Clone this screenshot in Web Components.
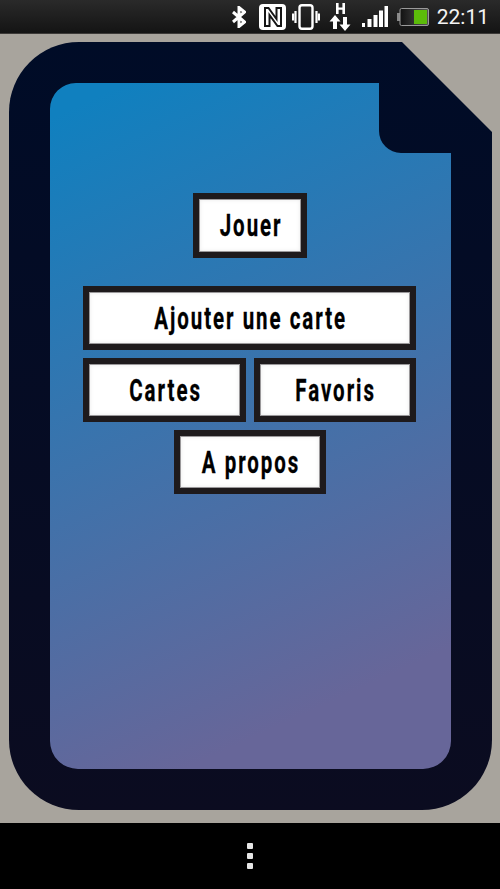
<!DOCTYPE html>
<html>
<head>
<meta charset="utf-8">
<title>Menu</title>
<style>
  html, body { margin: 0; height: 100%; background: #a8a49d; }
  body { display: flex; flex-direction: column; height: 889px; overflow: hidden; }
  .row { display: flex; gap: 8px; margin: 0 0 8px -1px; }
</style>
</head>
<body>
<status-bar time="22:11"></status-bar>
<card-frame>
  <menu-button style="width:114px;height:65px;margin-bottom:28px">Jouer</menu-button>
  <menu-button style="width:333px;margin:0 0 8px -1px">Ajouter une carte</menu-button>
  <div class="row">
    <menu-button style="width:163px">Cartes</menu-button>
    <menu-button style="width:162px">Favoris</menu-button>
  </div>
  <menu-button style="width:152px">A propos</menu-button>
</card-frame>
<nav-bar></nav-bar>

<script>
class StatusBar extends HTMLElement {
    constructor() {
        super();
        this.shadow = this.attachShadow({ mode: 'open' });
    }

    connectedCallback() {
        const time = this.getAttribute("time") || "";
        this.shadow.innerHTML = `
        <style>
            :host {
                display: flex; align-items: center; justify-content: flex-end;
                flex: none; height: 34px; box-sizing: border-box; padding-right: 11px;
                background: linear-gradient(#2a2a2a, #141414);
                border-bottom: 1px solid #3c3a38;
                color: #f4f4f4;
                font-family: Roboto, "Liberation Sans", sans-serif;
            }
            svg { display: block; flex: none; }
            .time { font-size: 21px; line-height: 34px; margin-left: 8px; }
        </style>
        <svg width="14" height="22" viewBox="0 0 14 22" fill="none" stroke="#fff" stroke-width="3" style="margin-right:13px">
            <path d="M1 6l11.500 10-5.500 4.500V1.500L12.500 6 1 16"/>
        </svg>
        <svg width="27" height="26" viewBox="0 0 27 26" style="margin-right:6px">
            <rect width="27" height="26" rx="4" fill="#fff"/>
            <path d="M6 22V4h3.500l8 11V4H22v18h-3.500l-8-11v11z" fill="#fff" stroke="#151515" stroke-width="2"/>
        </svg>
        <svg width="28" height="26" viewBox="0 0 28 26" fill="none" stroke="#fff" style="margin-right:9px">
            <rect x="7.500" y="1.200" width="13" height="23.600" rx="2.500" stroke-width="2.400"/>
            <path d="M3.500 7v12M1 9.500v7M24.500 7v12M27 9.500v7" stroke-width="2.200"/>
        </svg>
        <svg width="22" height="28" viewBox="0 0 22 28" fill="#fff" style="margin-right:11px">
            <path d="M7 0h2.600v4.400h3.800V0H16v11h-2.600V6.800H9.600V11H7z"/>
            <path d="M6 12l5.500 6.500H8V26H4v-7.500H.5zM16 28l-5.500-6.500H14V14h4v7.500h3.500z"/>
        </svg>
        <svg width="26" height="21" viewBox="0 0 26 21" fill="#fff" style="margin-right:9px">
            <rect x="0" y="17" width="3" height="4"/>
            <rect x="5.500" y="13" width="4" height="8"/>
            <rect x="11.500" y="9" width="4" height="12"/>
            <rect x="17" y="4.500" width="4" height="16.500"/>
            <rect x="22.500" y="0" width="3.500" height="21"/>
        </svg>
        <svg width="32" height="18" viewBox="0 0 32 18">
            <defs>
                <linearGradient id="cell" x1="0" x2="1" y1="0" y2="0">
                    <stop offset="0" stop-color="#111"/>
                    <stop offset="1" stop-color="#555"/>
                </linearGradient>
            </defs>
            <rect x="0" y="5" width="3" height="8" fill="#888"/>
            <rect x="3" y="0.500" width="28.500" height="17" rx="1.500" fill="url(#cell)" stroke="#9a9a9a"/>
            <rect x="17" y="2" width="13" height="14" fill="#5cbc0a"/>
        </svg>
        <span class="time">${time}</span>
    `;
    }
}

class CardFrame extends HTMLElement {
    constructor() {
        super();
        this.shadow = this.attachShadow({ mode: 'open' });
        this.shadow.innerHTML = `
        <style>
            :host { display: block; flex: 1; padding: 8px 8px 0 9px; }
            .stack { display: grid; width: 483px; height: 768px; }
            .stack > * { grid-area: 1 / 1; }
            svg { display: block; }
            .content {
                display: flex; flex-direction: column; align-items: center;
                padding-top: 151px; padding-right: 1px;
            }
        </style>
        <div class="stack">
            <svg width="483" height="768" viewBox="9 42 483 768">
                <defs>
                    <linearGradient id="fill" gradientUnits="userSpaceOnUse" x1="110" y1="90" x2="380" y2="680">
                        <stop offset="0" stop-color="#1080bf"/>
                        <stop offset="1" stop-color="#676699"/>
                    </linearGradient>
                    <linearGradient id="edge" x1="0" x2="0" y1="0" y2="1">
                        <stop offset="0" stop-color="#000c27"/>
                        <stop offset="1" stop-color="#0b0c20"/>
                    </linearGradient>
                </defs>
                <path fill="url(#edge)" d="M79 42H402L492 132V740A70 70 0 0 1 422 810H79A70 70 0 0 1 9 740V112A70 70 0 0 1 79 42Z"/>
                <path fill="url(#fill)" d="M76 83H379V131A22 22 0 0 0 401 153H451V741A28 28 0 0 1 423 769H78A28 28 0 0 1 50 741V109A26 26 0 0 1 76 83Z"/>
            </svg>
            <div class="content"><slot></slot></div>
        </div>
    `;
    }
}

class MenuButton extends HTMLElement {
    constructor() {
        super();
        this.shadow = this.attachShadow({ mode: 'open' });
        this.shadow.innerHTML = `
        <style>
            :host {
                display: flex; align-items: center; justify-content: center;
                box-sizing: border-box; height: 64px; flex: none;
                background: #fff;
                border: 6px solid #1e1a1c;
                box-shadow: inset 0 0 0 1px #9a989a, inset 0 0 4px 1px #ececec;
                color: #000;
                font-family: Roboto, "Liberation Sans", sans-serif;
                font-weight: 700; font-size: 31px; line-height: 1;
                cursor: pointer;
            }
            span {
                display: block; white-space: nowrap;
                letter-spacing: 3px; padding-left: 3px;
                -webkit-text-stroke: 0.3px #000;
                transform: scaleX(0.66);
            }
        </style>
        <span><slot></slot></span>
    `;
    }
}

class NavBar extends HTMLElement {
    constructor() {
        super();
        this.shadow = this.attachShadow({ mode: 'open' });
        this.shadow.innerHTML = `
        <style>
            :host {
                display: flex; flex-direction: column; align-items: center; justify-content: center;
                gap: 4px; flex: none; height: 66px; background: #000;
            }
            i { display: block; width: 6px; height: 6px; border-radius: 1px; background: #e6e6e6; }
        </style>
        <i></i><i></i><i></i>
    `;
    }
}

customElements.define('status-bar', StatusBar);
customElements.define('card-frame', CardFrame);
customElements.define('menu-button', MenuButton);
customElements.define('nav-bar', NavBar);
</script>
</body>
</html>
